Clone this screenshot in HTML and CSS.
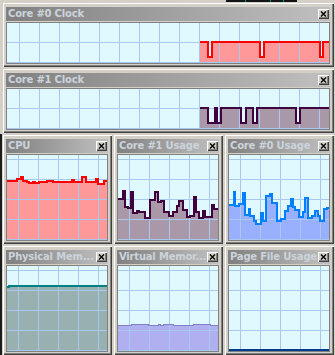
FILE: index.html
```html
<!DOCTYPE html>
<html lang="en">
<head>
    <meta charset="UTF-8">
    <title>System Monitor</title>
    <link rel="stylesheet" href="styles.css">
</head>
<body>
    <div class="backdrop"></div>

    <div class="monitor">
        <!-- clock speed graphs -->
        <section class="panel">
            <div class="caption">
                <span class="caption-text">Core #0 Clock</span>
                <span class="close"><svg viewBox="0 0 11 10"><path d="M3 2.5L8 7.5M8 2.5L3 7.5"/></svg></span>
            </div>
            <div class="graph graph-wide">
                <svg viewBox="0 0 322 40" preserveAspectRatio="none">
                    <defs>
                        <pattern id="grid-wide" width="20" height="20" x="12" y="19" patternUnits="userSpaceOnUse">
                            <path d="M0 0.5H20M0.5 0V20" stroke="#a8c8f0" fill="none"/>
                        </pattern>
                        <pattern id="grid-tile" width="20" height="20" x="11" y="4" patternUnits="userSpaceOnUse">
                            <path d="M0 0.5H20M0.5 0V20" stroke="#a8c8f0" fill="none"/>
                        </pattern>
                    </defs>
                    <path class="area red-area" d="M193,40 V19 H201 V34 H205 V19 H253 V34 H257 V19 H313 V34 H316 V19 H322 V40 Z"/>
                    <rect width="322" height="40" fill="url(#grid-wide)"/>
                    <path class="trace red-line" d="M193,19 H201 V34 H205 V19 H253 V34 H257 V19 H313 V34 H316 V19 H322"/>
                </svg>
            </div>
        </section>

        <section class="panel">
            <div class="caption">
                <span class="caption-text">Core #1 Clock</span>
                <span class="close"><svg viewBox="0 0 11 10"><path d="M3 2.5L8 7.5M8 2.5L3 7.5"/></svg></span>
            </div>
            <div class="graph graph-wide">
                <svg viewBox="0 0 322 40" preserveAspectRatio="none">
                    <path class="area mauve-area" d="M193,40 V19 H201 V34 H208 V19 H210 V34 H214 V19 H234 V34 H239 V19 H246 V34 H250 V19 H289 V34 H293 V19 H322 V40 Z"/>
                    <rect width="322" height="40" fill="url(#grid-wide)"/>
                    <path class="trace mauve-line" d="M193,19 H201 V34 H208 V19 H210 V34 H214 V19 H234 V34 H239 V19 H246 V34 H250 V19 H289 V34 H293 V19 H322"/>
                </svg>
            </div>
        </section>

        <!-- usage graphs -->
        <div class="tiles">
            <section class="panel">
                <div class="caption">
                    <span class="caption-text">CPU</span>
                    <span class="close"><svg viewBox="0 0 11 10"><path d="M3 2.5L8 7.5M8 2.5L3 7.5"/></svg></span>
                </div>
                <div class="graph graph-tile">
                    <svg viewBox="0 0 100 85" preserveAspectRatio="none">
                        <path class="area red-area" d="M0,85 V26 H10 V24 H14 V22 H16 V26 H20 V27 H22 V28 H26 V27 H28 V28 H32 V27 H40 V26 H46 V27 H65 V25 H67 V27 H75 V22 H79 V27 H89 V24 H91 V29 H97 V26 H100 V85 Z"/>
                        <rect width="100" height="85" fill="url(#grid-tile)"/>
                        <path class="trace red-line" d="M0,26 H10 V24 H14 V22 H16 V26 H20 V27 H22 V28 H26 V27 H28 V28 H32 V27 H40 V26 H46 V27 H65 V25 H67 V27 H75 V22 H79 V27 H89 V24 H91 V29 H97 V26 H100"/>
                    </svg>
                </div>
            </section>

            <section class="panel">
                <div class="caption">
                    <span class="caption-text">Core #1 Usage</span>
                    <span class="close"><svg viewBox="0 0 11 10"><path d="M3 2.5L8 7.5M8 2.5L3 7.5"/></svg></span>
                </div>
                <div class="graph graph-tile">
                    <svg viewBox="0 0 100 85" preserveAspectRatio="none">
                        <path class="area mauve-area" d="M0,85 V44 H5 V36 H7 V52 H10 V53 H13 V37 H15 V58 H19 V56 H21 V57 H27 V63 H32 V45 H37 V37 H40 V47 H43 V46 H46 V57 H51 V61 H55 V57 H59 V51 H61 V46 H65 V55 H69 V62 H72 V61 H76 V42 H78 V57 H81 V63 H85 V56 H87 V62 H94 V50 H96 V54 H100 V85 Z"/>
                        <rect width="100" height="85" fill="url(#grid-tile)"/>
                        <path class="trace mauve-line" d="M0,44 H5 V36 H7 V52 H10 V53 H13 V37 H15 V58 H19 V56 H21 V57 H27 V63 H32 V45 H37 V37 H40 V47 H43 V46 H46 V57 H51 V61 H55 V57 H59 V51 H61 V46 H65 V55 H69 V62 H72 V61 H76 V42 H78 V57 H81 V63 H85 V56 H87 V62 H94 V50 H96 V54 H100"/>
                    </svg>
                </div>
            </section>

            <section class="panel">
                <div class="caption">
                    <span class="caption-text">Core #0 Usage</span>
                    <span class="close"><svg viewBox="0 0 11 10"><path d="M3 2.5L8 7.5M8 2.5L3 7.5"/></svg></span>
                </div>
                <div class="graph graph-tile">
                    <svg viewBox="0 0 100 85" preserveAspectRatio="none">
                        <path class="area blue-area" d="M0,85 V50 H5 V37 H6 V51 H10 V49 H14 V38 H16 V60 H20 V54 H21 V61 H25 V66 H27 V69 H32 V58 H34 V66 H37 V41 H41 V39 H43 V48 H48 V66 H52 V64 H56 V56 H59 V51 H62 V44 H64 V52 H66 V55 H70 V62 H74 V57 H76 V43 H79 V63 H83 V61 H86 V56 H89 V61 H91 V66 H95 V54 H98 V53 H100 V85 Z"/>
                        <rect width="100" height="85" fill="url(#grid-tile)"/>
                        <path class="trace blue-line" d="M0,50 H5 V37 H6 V51 H10 V49 H14 V38 H16 V60 H20 V54 H21 V61 H25 V66 H27 V69 H32 V58 H34 V66 H37 V41 H41 V39 H43 V48 H48 V66 H52 V64 H56 V56 H59 V51 H62 V44 H64 V52 H66 V55 H70 V62 H74 V57 H76 V43 H79 V63 H83 V61 H86 V56 H89 V61 H91 V66 H95 V54 H98 V53 H100"/>
                    </svg>
                </div>
            </section>

            <section class="panel">
                <div class="caption">
                    <span class="caption-text">Physical Mem...</span>
                    <span class="close"><svg viewBox="0 0 11 10"><path d="M3 2.5L8 7.5M8 2.5L3 7.5"/></svg></span>
                </div>
                <div class="graph graph-tile">
                    <svg viewBox="0 0 100 85" preserveAspectRatio="none">
                        <path class="area teal-area" d="M0,85 V21 H2 V20 H100 V85 Z"/>
                        <rect width="100" height="85" fill="url(#grid-tile)"/>
                        <path class="trace teal-line" d="M0,21 H2 V20 H100"/>
                    </svg>
                </div>
            </section>

            <section class="panel">
                <div class="caption">
                    <span class="caption-text">Virtual Memor...</span>
                    <span class="close"><svg viewBox="0 0 11 10"><path d="M3 2.5L8 7.5M8 2.5L3 7.5"/></svg></span>
                </div>
                <div class="graph graph-tile">
                    <svg viewBox="0 0 100 85" preserveAspectRatio="none">
                        <path class="area lilac-area" d="M0,85 V59 H13 V58 H30 V59 H40 V58 H42 V59 H45 V58 H55 V59 H75 V58 H92 V59 H100 V85 Z"/>
                        <rect width="100" height="85" fill="url(#grid-tile)"/>
                        <path class="trace thin lilac-line" d="M0,59.5 H13.5 V58.5 H30.5 V59.5 H40.5 V58.5 H42.5 V59.5 H45.5 V58.5 H55.5 V59.5 H75.5 V58.5 H92.5 V59.5 H100"/>
                    </svg>
                </div>
            </section>

            <section class="panel">
                <div class="caption">
                    <span class="caption-text">Page File Usage</span>
                    <span class="close"><svg viewBox="0 0 11 10"><path d="M3 2.5L8 7.5M8 2.5L3 7.5"/></svg></span>
                </div>
                <div class="graph graph-tile">
                    <svg viewBox="0 0 100 85" preserveAspectRatio="none">
                        <rect width="100" height="85" fill="url(#grid-tile)"/>
                        <path class="trace navy-line" d="M0,84 H100"/>
                    </svg>
                </div>
            </section>
        </div>
    </div>
</body>
</html>
```

FILE: styles.css
```css
body {
    margin: 0;
    background-color: #d4d0c8;
    font-family: "DejaVu Sans", "Liberation Sans", sans-serif;
    overflow: hidden;
}
.backdrop {
    position: absolute;
    top: 0;
    left: 226px;
    width: 71px;
    height: 2px;
    background: #141414;
    background-image: linear-gradient(to right, transparent 19px, #00a060 19px, #00a060 20px, transparent 20px, transparent 44px, #00a060 44px, #00a060 45px, transparent 45px, transparent 57px, #00a060 57px, #00a060 58px, transparent 58px);
}
.monitor {
    display: flex;
    flex-direction: column;
    gap: 1px;
    padding: 2px 1px 0 2px;
}
.panel {
    display: flex;
    flex-direction: column;
    padding: 5px 4px 3px;
    background-color: #d4d0c8;
    box-shadow: inset 1px 1px #d4d0c8, inset 2px 2px #ffffff,
                inset -1px -1px #404040, inset -2px -2px #808080;
}
.caption {
    display: flex;
    align-items: center;
    height: 14px;
    overflow: hidden;
    background: linear-gradient(to right, #808080, #c0c0c0);
}
.caption-text {
    flex: 1;
    min-width: 0;
    white-space: nowrap;
    padding-left: 2px;
    font-size: 10px;
    font-weight: bold;
    letter-spacing: -0.2px;
    line-height: 14px;
    color: #ccd3db;
}
.close {
    flex: none;
    width: 11px;
    height: 10px;
    margin-right: 1px;
    background-color: #d4d0c8;
    box-shadow: inset 1px 1px #ffffff, inset -1px -1px #404040, inset -2px -2px #808080;
}
.close svg {
    display: block;
    width: 11px;
    height: 10px;
}
.close path {
    stroke: #000;
    stroke-width: 1.4;
    fill: none;
}
.graph {
    margin-top: 1px;
    border: 1px solid #808080;
    background-color: #e0f8ff;
}
.graph-wide {
    height: 40px;
}
.graph-tile {
    height: 85px;
}
.graph svg {
    display: block;
    width: 100%;
    height: 100%;
}
.tiles {
    display: grid;
    grid-template-columns: repeat(3, 110px);
    gap: 1px;
    margin-left: -2px;
    border-left: 2px solid #1c1c1c;
}
.area {
    stroke: none;
}
.trace {
    fill: none;
    stroke-width: 2;
    shape-rendering: crispEdges;
}
.trace.thin {
    stroke-width: 1;
}
.red-area { fill: #ff9898; }
.red-line { stroke: #ff0000; }
.mauve-area { fill: #a898a8; }
.mauve-line { stroke: #400040; }
.blue-area { fill: #98b0ff; }
.blue-line { stroke: #0080ff; }
.teal-area { fill: #98b0b0; }
.teal-line { stroke: #008080; }
.lilac-area { fill: #b0b0f0; }
.lilac-line { stroke: #8080c8; }
.navy-line { stroke: #003c8c; }
```
